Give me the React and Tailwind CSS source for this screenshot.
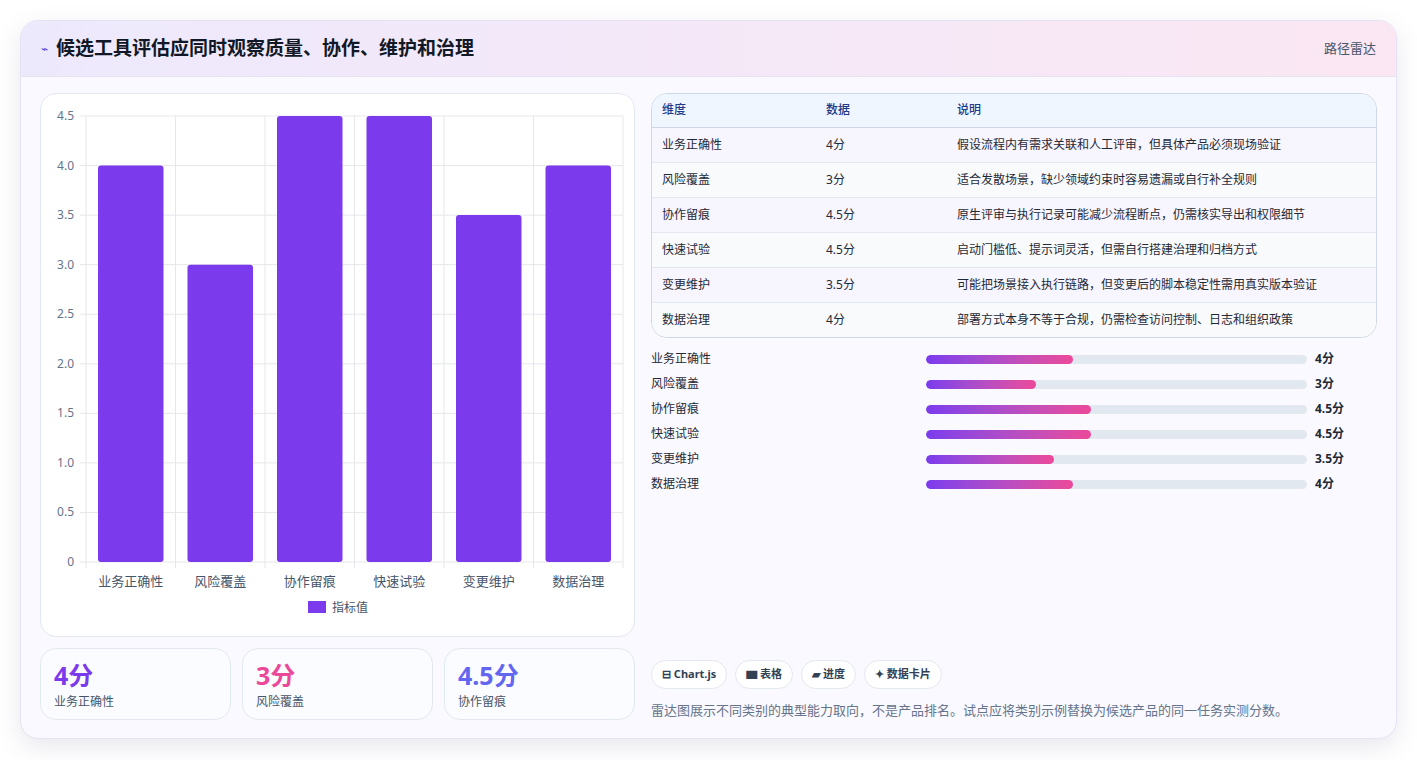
import React from "react";

const rows = [
  { name: "业务正确性", v: 4, note: "假设流程内有需求关联和人工评审，但具体产品必须现场验证" },
  { name: "风险覆盖", v: 3, note: "适合发散场景，缺少领域约束时容易遗漏或自行补全规则" },
  { name: "协作留痕", v: 4.5, note: "原生评审与执行记录可能减少流程断点，仍需核实导出和权限细节" },
  { name: "快速试验", v: 4.5, note: "启动门槛低、提示词灵活，但需自行搭建治理和归档方式" },
  { name: "变更维护", v: 3.5, note: "可能把场景接入执行链路，但变更后的脚本稳定性需用真实版本验证" },
  { name: "数据治理", v: 4, note: "部署方式本身不等于合规，仍需检查访问控制、日志和组织政策" },
];

const font = { fontFamily: '"Noto Sans", "Noto Sans CJK SC", sans-serif' };

// bar chart, plot area in svg coords
const BarChart = () => {
  const x0 = 45, x1 = 582, y0 = 22, y1 = 468;
  const unit = (y1 - y0) / 4.5;
  const cw = (x1 - x0) / 6;
  const ticks = [0, 0.5, 1, 1.5, 2, 2.5, 3, 3.5, 4, 4.5];
  return (
    <svg width="594" height="543" viewBox="0 0 594 543" className="block">
      {ticks.map((t) => (
        <g key={t}>
          <line x1={x0 - 6} x2={x1} y1={y1 - t * unit} y2={y1 - t * unit} stroke="#e5e7eb" />
          <text x={x0 - 12} y={y1 - t * unit + 4} textAnchor="end" fontSize="12" fill="#64748b" style={font}>
            {t === 0 ? "0" : t.toFixed(1)}
          </text>
        </g>
      ))}
      {[0, 1, 2, 3, 4, 5, 6].map((i) => (
        <line key={i} x1={x0 + i * cw} x2={x0 + i * cw} y1={y0} y2={y1 + 6} stroke="#e5e7eb" />
      ))}
      {rows.map((r, i) => {
        const h = r.v * unit;
        return (
          <g key={r.name}>
            <rect x={x0 + i * cw + 12} y={y1 - h} width={cw - 24} height={h} rx="3" fill="#7c3aed" />
            <text x={x0 + i * cw + cw / 2} y={y1 + 24} textAnchor="middle" fontSize="13" fill="#475569" style={font}>
              {r.name}
            </text>
          </g>
        );
      })}
      <rect x="267" y="507" width="18" height="12" fill="#7c3aed" />
      <text x="291" y="518" fontSize="12" fill="#475569" style={font}>指标值</text>
    </svg>
  );
};

const Stat = ({ value, label, color }) => (
  <div className="flex-1 rounded-2xl border border-[#e2e8f0] bg-[#fbfcff] px-[13px] pt-[10px] pb-2">
    <div className={`text-[25px] font-bold leading-[32px] ${color}`}>{value}</div>
    <div className="text-[12px] text-[#475569] mt-[2px]">{label}</div>
  </div>
);

export default function App() {
  return (
    <div className="min-h-screen bg-white p-5" style={font}>
      <div className="rounded-[18px] border border-[#e4e2f3] overflow-hidden shadow-[0_8px_24px_rgba(100,100,140,0.15)] bg-[#faf9ff]">
        <div className="h-[56px] flex items-center justify-between px-5 bg-gradient-to-r from-[#ede9fc] to-[#fbe7f3] border-b border-[#e6e2f2]">
          <div className="flex items-center gap-2">
            <span className="text-[#4f46e5] text-[12px]">⌁</span>
            <span className="text-[19px] font-bold text-[#111827]">候选工具评估应同时观察质量、协作、维护和治理</span>
          </div>
          <span className="text-[13px] text-[#475569]">路径雷达</span>
        </div>
        <div className="flex gap-4 px-[19px] pt-4 pb-[18px]">
          <div className="w-[595px] flex flex-col gap-[11px]">
            <div className="rounded-2xl border border-[#e2e8f0] bg-white overflow-hidden h-[544px]">
              <BarChart />
            </div>
            <div className="flex gap-[11px]">
              <Stat value="4分" label="业务正确性" color="text-[#7c3aed]" />
              <Stat value="3分" label="风险覆盖" color="text-[#ec4899]" />
              <Stat value="4.5分" label="协作留痕" color="text-[#6366f1]" />
            </div>
          </div>
          <div className="flex-1 flex flex-col">
            <div className="rounded-2xl border border-[#cfd8e6] overflow-hidden bg-white">
              <table className="w-full text-[12px]">
                <thead>
                  <tr className="bg-[#eff6ff] text-[#1e3a8a] h-[33px] border-b border-[#cfd8e6]">
                    <th className="text-left font-medium pl-[10px] w-[174px]">维度</th>
                    <th className="text-left font-medium w-[131px]">数据</th>
                    <th className="text-left font-medium">说明</th>
                  </tr>
                </thead>
                <tbody>
                  {rows.map((r, i) => (
                    <tr key={r.name} className={`h-[35px] text-[#1f2937] ${i < 5 ? "border-b border-[#e2e8f0]" : ""} ${i % 2 ? "bg-[#f8fafc]" : "bg-[#f7f5fd]"}`}>
                      <td className="pl-[10px]">{r.name}</td>
                      <td>{r.v}分</td>
                      <td>{r.note}</td>
                    </tr>
                  ))}
                </tbody>
              </table>
            </div>
            <div className="mt-[12px] flex flex-col gap-[7px]">
              {rows.map((r) => (
                <div key={r.name} className="flex items-center h-[18px] text-[12px]">
                  <span className="w-[275px] text-[#1f2937]">{r.name}</span>
                  <div className="w-[381px] h-[9px] rounded-full bg-[#e2e8f0] overflow-hidden">
                    <div className="h-full rounded-full bg-gradient-to-r from-[#7c3aed] to-[#ec4899]" style={{ width: `${(r.v / 10.4) * 100}%` }} />
                  </div>
                  <span className="ml-[8px] font-bold text-[#1f2937]">{r.v}分</span>
                </div>
              ))}
            </div>
            <div className="mt-auto flex gap-[8px]">
              {["⊟ Chart.js", "▆ 表格", "▰ 进度", "✦ 数据卡片"].map((c) => (
                <span key={c} className="h-[29px] px-[10px] rounded-full border border-[#e2e8f0] bg-white text-[11px] font-bold text-[#334155] flex items-center">{c}</span>
              ))}
            </div>
            <div className="mt-[12px] text-[13px] text-[#64748b]">雷达图展示不同类别的典型能力取向，不是产品排名。试点应将类别示例替换为候选产品的同一任务实测分数。</div>
          </div>
        </div>
      </div>
    </div>
  );
}
